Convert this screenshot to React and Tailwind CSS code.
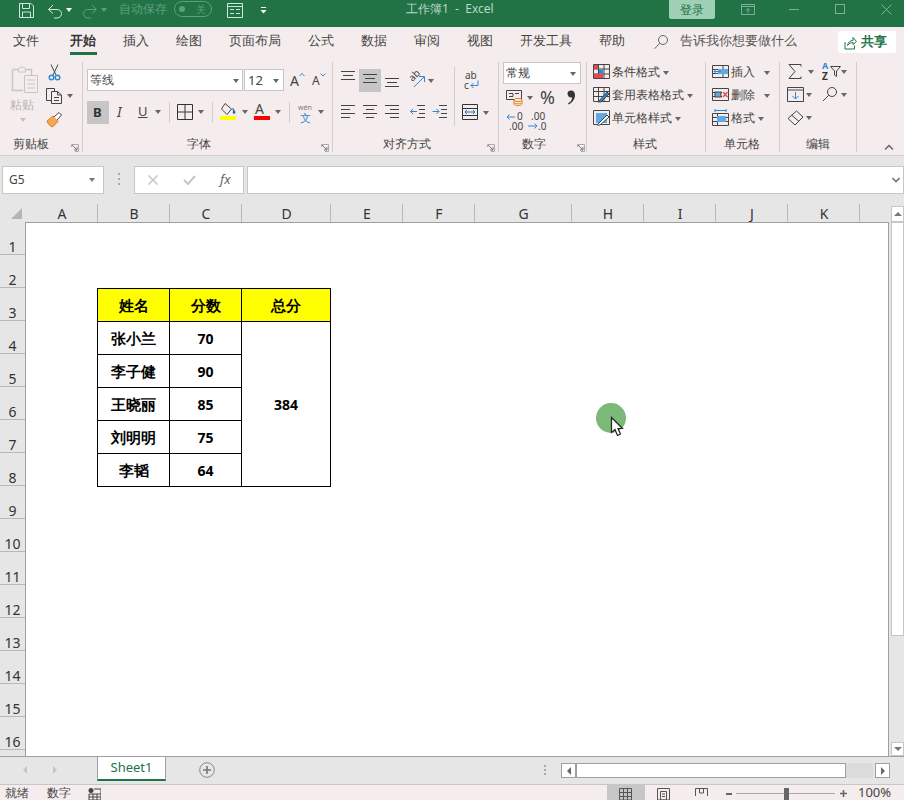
const Caret = ({ c = "", color = "border-t-[#666]" }) => (
  <span className={`absolute w-0 h-0 border-x-[3.5px] border-x-transparent border-t-[4px] ${color} ${c}`} />
);
const Sep = ({ c }) => <div className={`absolute w-px bg-[#d2cece] ${c}`} />;
const T = ({ c = "", children }) => (
  <span className={`absolute whitespace-nowrap leading-none ${c}`}>{children}</span>
);
const Launcher = ({ c }) => (
  <svg className={`absolute ${c}`} width="8" height="8" viewBox="0 0 8 8" fill="none" stroke="#777">
    <path d="M0.5 3V0.5H7.5V7.5H4" stroke="#aaa" />
    <path d="M1 1L6 6M6 3V6H3" />
  </svg>
);
const Ico = ({ c, w = 16, h = 16, children }) => (
  <svg className={`absolute ${c}`} width={w} height={h} viewBox={`0 0 ${w} ${h}`} fill="none">
    {children}
  </svg>
);
const Lines = ({ c, ys, xs }) => (
  <Ico c={c} w={15} h={15}>
    {ys.map((y, i) => (
      <path key={i} d={`M${xs[i][0]} ${y}H${xs[i][1]}`} stroke="#444" />
    ))}
  </Ico>
);

const cols = [
  ["A", "w-[72px]"], ["B", "w-[72px]"], ["C", "w-[72px]"], ["D", "w-[89px]"], ["E", "w-[72px]"], ["F", "w-[72px]"],
  ["G", "w-[97px]"], ["H", "w-[72px]"], ["I", "w-[72px]"], ["J", "w-[72px]"], ["K", "w-[72px]"],
];
const rows = Array.from({ length: 16 }, (_, i) => i + 1);
const tabs = [
  ["文件", "left-[13px]"], ["插入", "left-[123px]"], ["绘图", "left-[176px]"], ["页面布局", "left-[229px]"],
  ["公式", "left-[308px]"], ["数据", "left-[361px]"], ["审阅", "left-[414px]"], ["视图", "left-[467px]"],
  ["开发工具", "left-[520px]"], ["帮助", "left-[599px]"],
];
const people = [["张小兰", "70"], ["李子健", "90"], ["王晓丽", "85"], ["刘明明", "75"], ["李韬", "64"]];

function TitleBar() {
  const dim = "#7fb096";
  const w = "#d3e5da";
  return (
    <div className="absolute left-0 top-0 w-[904px] h-[27px] bg-[#217346]">
      <Ico c="left-[18px] top-[2px]" w={17} h={17}>
        <path d="M1.5 1.5H13L15.5 4V15.5H1.5Z M4.5 1.5V6.5H11.5V1.5 M4.5 15.5V10H12.5V15.5" stroke={w} />
      </Ico>
      <Ico c="left-[47px] top-[3px]" w={16} h={16}>
        <path d="M1.5 6.5H10C13 6.5 14.5 8.5 14.5 10.5S13 15 10 15H7M1.5 6.5L6 2M1.5 6.5L6 10.5" stroke={w} />
      </Ico>
      <Caret c="left-[66px] top-[8px]" color="border-t-white" />
      <Ico c="left-[82px] top-[3px]" w={16} h={16}>
        <path d="M14.5 6.5H6C3 6.5 1.5 8.5 1.5 10.5S3 15 6 15H9M14.5 6.5L10 2M14.5 6.5L10 10.5" stroke="#5f9d7c" />
      </Ico>
      <Caret c="left-[101px] top-[8px]" color="border-t-[#5f9d7c]" />
      <T c="left-[119px] top-[3px] text-[12px] text-[#5f9d7c]">自动保存</T>
      <div className="absolute left-[174px] top-[1px] w-[38px] h-[16px] rounded-full border border-[#5f9d7c]">
        <div className="absolute left-[4px] top-[4px] w-[6px] h-[6px] rounded-full bg-[#5f9d7c]" />
        <T c="left-[21px] top-[2px] text-[10px] text-[#5f9d7c]">关</T>
      </div>
      <Ico c="left-[227px] top-[3px]" w={16} h={15}>
        <path d="M0.5 0.5H15.5V14.5H0.5Z M0.5 3.5H15.5 M3 6.5H7M9 6.5H13M3 10.5H7M9 10.5H13" stroke={w} />
      </Ico>
      <Ico c="left-[260px] top-[7px]" w={7} h={7}>
        <path d="M1 0.5H6" stroke="white" />
        <path d="M0.5 3H6.5L3.5 6.5Z" fill="white" />
      </Ico>
      <T c="left-[406px] top-[3px] text-[12px] text-[#bcd6c8]">工作簿1&nbsp;&nbsp;-&nbsp;&nbsp;Excel</T>
      <div className="absolute left-[669px] top-0 w-[46px] h-[19px] rounded-b-[2px] bg-[#9fd0b5] flex items-center justify-center text-[12px] text-[#217346]">
        登录
      </div>
      <Ico c="left-[741px] top-[4px]" w={14} h={11}>
        <path d="M0.5 0.5H13.5V10.5H0.5Z M0.5 2.5H13.5 M7 9V4.5M5 6.5L7 4.5L9 6.5" stroke={dim} />
      </Ico>
      <div className="absolute left-[789px] top-[9px] w-[10px] h-px bg-[#7fb096]" />
      <div className="absolute left-[835px] top-[4px] w-[10px] h-[10px] border border-[#7fb096]" />
      <Ico c="left-[881px] top-[4px]" w={11} h={11}>
        <path d="M0.5 0.5L10.5 10.5M10.5 0.5L0.5 10.5" stroke={dim} />
      </Ico>
    </div>
  );
}

function TabRow() {
  return (
    <div className="absolute left-0 top-[27px] w-[904px] h-[28px] bg-[#f5eded] text-[13px] text-[#444]">
      {tabs.map(([n, c]) => (
        <T key={n} c={`${c} top-[7px]`}>{n}</T>
      ))}
      <T c="left-[70px] top-[7px] font-bold text-[#333]">开始</T>
      <div className="absolute left-[70px] top-[25px] w-[27px] h-[3px] bg-[#217346]" />
      <Ico c="left-[653px] top-[7px]" w={16} h={16}>
        <circle cx="10" cy="6" r="4.5" stroke="#666" />
        <path d="M6.8 9.2L1.5 14.8" stroke="#666" />
      </Ico>
      <T c="left-[680px] top-[7px] text-[#555]">告诉我你想要做什么</T>
      <div className="absolute left-[838px] top-[4px] w-[58px] h-[22px] bg-white rounded-[2px]" />
      <Ico c="left-[844px] top-[9px]" w={13} h={14}>
        <path d="M1 6V13H10.5V9.5M3.5 9.5C4 6 6.5 4.5 9 4.5V1.5L12.5 5.5L9 8.5V6.5C7 6.5 5 7.5 3.5 9.5Z" stroke="#217346" />
      </Ico>
      <T c="left-[861px] top-[8px] font-bold text-[#217346]">共享</T>
    </div>
  );
}

function Ribbon() {
  return (
    <div className="absolute left-0 top-[55px] w-[904px] h-[101px] bg-[#f5eded] border-b border-[#d0cfcf] text-[12px] text-[#444]">
      <div className="absolute -top-[55px] left-0 w-[904px] h-[156px] pointer-events-none">
        {/* clipboard */}
        <Ico c="left-[11px] top-[65px]" w={28} h={29}>
          <path d="M1.5 4.5H7M15 4.5H20.5V10M1.5 4.5V25.5H12" stroke="#c6c6c6" strokeWidth="1.5" />
          <path d="M7.5 4C7.5 1.5 14.5 1.5 14.5 4V7H7.5Z" stroke="#c6c6c6" />
          <path d="M13.5 10.5H26.5V27.5H13.5Z M16.5 15H24M16.5 19H24M16.5 23H24" stroke="#c6c6c6" />
        </Ico>
        <T c="left-[10px] top-[99px] text-[12px] text-[#b5b5b5]">粘贴</T>
        <Caret c="left-[20px] top-[118px]" color="border-t-[#c0c0c0]" />
        <Ico c="left-[48px] top-[64px]" w={13} h={17}>
          <path d="M3 0.5L8 11M10 0.5L5 11" stroke="#444" />
          <circle cx="3.5" cy="13.5" r="2.3" stroke="#2b88d8" strokeWidth="1.4" />
          <circle cx="9.5" cy="13.5" r="2.3" stroke="#2b88d8" strokeWidth="1.4" />
        </Ico>
        <Ico c="left-[46px] top-[88px]" w={17} h={16}>
          <path d="M0.5 0.5H8.5V3M0.5 0.5V12.5H5" stroke="#444" />
          <path d="M5.5 3.5H11.5L15.5 7V15.5H5.5Z M11.5 3.5V7H15.5 M8 9.5H13M8 12.5H13" stroke="#444" />
        </Ico>
        <Caret c="left-[67px] top-[94px]" />
        <Ico c="left-[46px] top-[111px]" w={17} h={17}>
          <path d="M1 10L7 5L12 10.5L6.5 16C4 15 2 13 1 10Z" fill="#f6a94f" stroke="#d9782a" />
          <path d="M8 6L13 1.5L15.5 4L11 9" fill="#fff" stroke="#444" />
        </Ico>
        <T c="left-[13px] top-[138px] text-[#444]">剪贴板</T>
        <Launcher c="left-[71px] top-[144px]" />
        <Sep c="left-[82px] top-[62px] h-[90px]" />

        {/* font */}
        <div className="absolute left-[87px] top-[69px] w-[156px] h-[22px] bg-white border border-[#c6c6c6]" />
        <T c="left-[90px] top-[74px]">等线</T>
        <Caret c="left-[233px] top-[79px]" />
        <div className="absolute left-[244px] top-[69px] w-[40px] h-[22px] bg-white border border-[#c6c6c6]" />
        <T c="left-[248px] top-[74px] text-[13px]">12</T>
        <Caret c="left-[273px] top-[79px]" />
        <T c="left-[290px] top-[74px] text-[14px]">A</T>
        <Ico c="left-[299px] top-[72px]" w={6} h={5}><path d="M0.5 4L3 1.5L5.5 4" stroke="#2b88d8" /></Ico>
        <T c="left-[312px] top-[75px] text-[12px]">A</T>
        <Ico c="left-[320px] top-[72px]" w={6} h={5}><path d="M0.5 1.5L3 4L5.5 1.5" stroke="#2b88d8" /></Ico>
        <div className="absolute left-[87px] top-[101px] w-[22px] h-[23px] bg-[#c6c6c6]" />
        <T c="left-[93px] top-[106px] text-[13px] font-bold text-[#333]">B</T>
        <T c="left-[117px] top-[105px] text-[14px] italic font-['Liberation_Serif',serif]">I</T>
        <T c="left-[138px] top-[105px] text-[13px] underline">U</T>
        <Caret c="left-[155px] top-[110px]" />
        <Sep c="left-[169px] top-[102px] h-[21px]" />
        <Ico c="left-[177px] top-[104px]" w={16} h={16}>
          <path d="M0.5 0.5H15.5V15.5H0.5Z M8 0.5V15.5 M0.5 8H15.5" stroke="#333" />
        </Ico>
        <Caret c="left-[198px] top-[110px]" />
        <Sep c="left-[212px] top-[102px] h-[21px]" />
        <Ico c="left-[220px] top-[103px]" w={17} h={13}>
          <path d="M5 0.5L1.5 6L7 11.5L11.5 6Z" stroke="#444" />
          <path d="M12.5 5C14 7 15 8 15 9.5C15 10.8 13 10.8 13 9.5" fill="#2b6cb0" stroke="#2b6cb0" />
        </Ico>
        <div className="absolute left-[220px] top-[116px] w-[16px] h-[4px] bg-[#ffff00]" />
        <Caret c="left-[242px] top-[110px]" />
        <T c="left-[255px] top-[102px] text-[14px]">A</T>
        <div className="absolute left-[254px] top-[116px] w-[16px] h-[4px] bg-[#ff0000]" />
        <Caret c="left-[275px] top-[110px]" />
        <Sep c="left-[289px] top-[102px] h-[21px]" />
        <T c="left-[298px] top-[104px] text-[7px] text-[#777]">wén</T>
        <T c="left-[300px] top-[112px] text-[11px] text-[#2b88d8]">文</T>
        <Caret c="left-[318px] top-[110px]" />
        <T c="left-[187px] top-[138px]">字体</T>
        <Launcher c="left-[321px] top-[144px]" />
        <Sep c="left-[332px] top-[62px] h-[90px]" />

        {/* alignment */}
        <div className="absolute left-[359px] top-[69px] w-[22px] h-[23px] bg-[#c6c6c6]" />
        <Lines c="left-[341px] top-[70px]" ys={[1.5, 5.5, 9.5]} xs={[[0, 14], [2, 12], [0, 14]]} />
        <Lines c="left-[363px] top-[73px]" ys={[1.5, 5.5, 9.5]} xs={[[0, 14], [2, 12], [0, 14]]} />
        <Lines c="left-[385px] top-[77px]" ys={[1.5, 5.5, 9.5]} xs={[[0, 14], [2, 12], [0, 14]]} />
        <T c="left-[408px] top-[70px] text-[10px] -rotate-45">ab</T>
        <Ico c="left-[413px] top-[75px]" w={13} h={13}>
          <path d="M1 12L11 2M6 1.5H11.5V7" stroke="#2b88d8" />
        </Ico>
        <Caret c="left-[428px] top-[79px]" />
        {[["left-[341px]", [[0, 14], [0, 9], [0, 14], [0, 9]]], ["left-[363px]", [[0, 14], [3, 11], [0, 14], [3, 11]]], ["left-[385px]", [[0, 14], [5, 14], [0, 14], [5, 14]]]].map(([c, xs], i) => (
          <Lines key={i} c={`${c} top-[104px]`} ys={[1.5, 5.5, 9.5, 13.5]} xs={xs} />
        ))}
        <Ico c="left-[410px] top-[104px]" w={16} h={15}>
          <path d="M7 1.5H15M9 5.5H15M9 9.5H15M7 13.5H15" stroke="#444" />
          <path d="M7 7.5H0.5M3 5L0.5 7.5L3 10" stroke="#2b88d8" />
        </Ico>
        <Ico c="left-[432px] top-[104px]" w={16} h={15}>
          <path d="M7 1.5H15M9 5.5H15M9 9.5H15M7 13.5H15" stroke="#444" />
          <path d="M0.5 7.5H7M4.5 5L7 7.5L4.5 10" stroke="#2b88d8" />
        </Ico>
        <Sep c="left-[454px] top-[67px] h-[59px]" />
        <T c="left-[465px] top-[70px] text-[10px]">ab</T>
        <T c="left-[464px] top-[80px] text-[10px]">c</T>
        <Ico c="left-[470px] top-[80px]" w={9} h={10}>
          <path d="M8 0.5V5.5H1M3.5 3L1 5.5L3.5 8" stroke="#2b88d8" />
        </Ico>
        <Ico c="left-[462px] top-[104px]" w={16} h={16}>
          <path d="M0.5 0.5H15.5V15.5H0.5Z M0.5 4.5H15.5M0.5 11.5H15.5" stroke="#333" />
          <path d="M3 8H13M5 6L3 8L5 10M11 6L13 8L11 10" stroke="#1e6fb8" />
        </Ico>
        <Caret c="left-[483px] top-[111px]" />
        <T c="left-[383px] top-[138px]">对齐方式</T>
        <Launcher c="left-[487px] top-[144px]" />
        <Sep c="left-[498px] top-[62px] h-[90px]" />

        {/* number */}
        <div className="absolute left-[503px] top-[62px] w-[78px] h-[22px] bg-white border border-[#c6c6c6]" />
        <T c="left-[506px] top-[67px]">常规</T>
        <Caret c="left-[570px] top-[72px]" />
        <Ico c="left-[506px] top-[90px]" w={17} h={16}>
          <path d="M0.5 0.5H15.5V9.5H0.5Z" stroke="#444" />
          <path d="M3 3.5H7V6.5H3M9 3.5H13" stroke="#444" />
          <ellipse cx="12" cy="10" rx="4" ry="1.6" fill="#f5eded" stroke="#e8862a" />
          <path d="M8 10V14C8 16 16 16 16 14V10M8 12.5C8 14.2 16 14.2 16 12.5" stroke="#e8862a" />
        </Ico>
        <Caret c="left-[527px] top-[96px]" />
        <T c="left-[540px] top-[88px] text-[18px] font-['Liberation_Sans',sans-serif]">%</T>
        <Ico c="left-[566px] top-[90px]" w={10} h={15}>
          <path d="M1.5 3.5C1.5 1.5 3 0.5 5 0.5C7.5 0.5 9 2.5 9 5C9 9 6.5 12.5 2.5 14.5L2 13.5C4.5 12 6 10 6.2 7.5C3.5 8 1.5 6 1.5 3.5Z" fill="#333" />
        </Ico>
        <T c="left-[517px] top-[111px] text-[10px]">0</T>
        <T c="left-[509px] top-[121px] text-[10px]">.00</T>
        <Ico c="left-[506px] top-[113px]" w={10} h={8}>
          <path d="M9 4H1M3.5 1.5L1 4L3.5 6.5" stroke="#2b88d8" />
        </Ico>
        <T c="left-[531px] top-[111px] text-[10px]">.00</T>
        <T c="left-[538px] top-[121px] text-[10px]">.0</T>
        <Ico c="left-[528px] top-[122px]" w={10} h={8}>
          <path d="M0 4H9M6.5 1.5L9 4L6.5 6.5" stroke="#2b88d8" />
        </Ico>
        <T c="left-[522px] top-[138px]">数字</T>
        <Launcher c="left-[577px] top-[144px]" />
        <Sep c="left-[586px] top-[62px] h-[90px]" />

        {/* styles */}
        <Ico c="left-[593px] top-[64px]" w={17} h={15}>
          <path d="M0.5 0.5H16.5V14.5H0.5Z M5.5 0.5V14.5M11 0.5V14.5M0.5 5H16.5M0.5 10H16.5" stroke="#444" />
          <rect x="1" y="1" width="4" height="4" fill="#e8484d" />
          <rect x="1" y="10" width="9" height="4" fill="#e8484d" />
          <rect x="6" y="5.5" width="4" height="4" fill="#2b88d8" />
        </Ico>
        <T c="left-[612px] top-[66px]">条件格式</T>
        <Caret c="left-[663px] top-[71px]" />
        <Ico c="left-[593px] top-[87px]" w={17} h={16}>
          <path d="M0.5 0.5H16.5V14.5H0.5Z M0.5 4.5H16.5M0.5 9.5H16.5M5.5 0.5V14.5M11 0.5V14.5" stroke="#444" />
          <path d="M5 15L14 5L16 7L8 15Z" fill="#2b88d8" stroke="#444" />
        </Ico>
        <T c="left-[612px] top-[89px]">套用表格格式</T>
        <Caret c="left-[687px] top-[94px]" />
        <Ico c="left-[593px] top-[110px]" w={17} h={16}>
          <path d="M0.5 0.5H16.5V14.5H0.5Z" stroke="#444" />
          <rect x="3" y="3" width="11" height="10" fill="#5ea9e6" />
          <path d="M4 15L14 5L16 7L7 15Z" fill="#fff" stroke="#444" />
        </Ico>
        <T c="left-[612px] top-[112px]">单元格样式</T>
        <Caret c="left-[675px] top-[117px]" />
        <T c="left-[633px] top-[138px]">样式</T>
        <Sep c="left-[705px] top-[62px] h-[90px]" />

        {/* cells */}
        <Ico c="left-[712px] top-[64px]" w={17} h={15}>
          <path d="M0.5 1.5H16.5V13.5H0.5Z M0.5 5.5H16.5M0.5 9.5H16.5M11 1.5V13.5" stroke="#444" />
          <rect x="6" y="5" width="10" height="5" fill="#5ea9e6" />
          <path d="M9 7.5H2M4.5 5L2 7.5L4.5 10" stroke="#2b88d8" />
        </Ico>
        <T c="left-[731px] top-[66px]">插入</T>
        <Caret c="left-[764px] top-[71px]" />
        <Ico c="left-[712px] top-[87px]" w={17} h={15}>
          <path d="M0.5 1.5H16.5V13.5H0.5Z M0.5 5.5H10M0.5 9.5H10" stroke="#444" />
          <rect x="3" y="5" width="6" height="5" fill="#5ea9e6" stroke="#444" />
          <path d="M11 5L15.5 10M15.5 5L11 10" stroke="#e8484d" strokeWidth="1.4" />
        </Ico>
        <T c="left-[731px] top-[89px]">删除</T>
        <Caret c="left-[764px] top-[94px]" />
        <Ico c="left-[712px] top-[109px]" w={17} h={17}>
          <path d="M0.5 4.5H16.5V16.5H0.5Z M5.5 4.5V16.5M0.5 8.5H16.5M0.5 12.5H16.5" stroke="#444" />
          <rect x="5" y="7" width="9" height="6" fill="#5ea9e6" />
          <path d="M3 1.5H14M3 0V3M14 0V3" stroke="#2b88d8" />
        </Ico>
        <T c="left-[731px] top-[112px]">格式</T>
        <Caret c="left-[758px] top-[117px]" />
        <T c="left-[724px] top-[138px]">单元格</T>
        <Sep c="left-[779px] top-[62px] h-[90px]" />

        {/* editing */}
        <Ico c="left-[788px] top-[64px]" w={15} h={15}>
          <path d="M13 2.5V0.5H1L7 7.5L1 14.5H13V12.5" stroke="#444" />
        </Ico>
        <Caret c="left-[808px] top-[70px]" />
        <T c="left-[822px] top-[61px] text-[9px] font-bold text-[#2b88d8]">A</T>
        <T c="left-[822px] top-[71px] text-[10px] font-bold text-[#333]">Z</T>
        <Ico c="left-[830px] top-[66px]" w={11} h={11}>
          <path d="M0.5 0.5H10.5L6.5 5V10.5L4.5 9V5Z" stroke="#444" />
        </Ico>
        <Caret c="left-[841px] top-[70px]" />
        <Ico c="left-[787px] top-[87px]" w={17} h={15}>
          <path d="M0.5 0.5H16.5V14.5H0.5Z M0.5 3H16.5" stroke="#444" />
          <path d="M8.5 5V12M5.5 9L8.5 12L11.5 9" stroke="#2b88d8" />
        </Ico>
        <Caret c="left-[806px] top-[93px]" />
        <Ico c="left-[822px] top-[86px]" w={16} h={16}>
          <circle cx="10" cy="6" r="4.5" stroke="#444" />
          <path d="M6.8 9.2L1 15" stroke="#444" />
        </Ico>
        <Caret c="left-[841px] top-[93px]" />
        <Ico c="left-[787px] top-[110px]" w={17} h={16}>
          <path d="M9.5 1L16 7L8 15L1 8.5Z M4.5 5L12 11.5" stroke="#444" />
        </Ico>
        <Caret c="left-[806px] top-[116px]" />
        <T c="left-[806px] top-[138px]">编辑</T>
        <Sep c="left-[856px] top-[62px] h-[90px]" />
        <Ico c="left-[884px] top-[144px]" w={10} h={7}>
          <path d="M1 5.5L5 1.5L9 5.5" stroke="#666" strokeWidth="1.5" />
        </Ico>
      </div>
    </div>
  );
}

function FormulaBar() {
  return (
    <div className="absolute left-0 top-[156px] w-[904px] h-[48px] bg-[#e6e6e6]">
      <div className="absolute left-[2px] top-[10px] w-[102px] h-[28px] bg-white border border-[#c6c6c6]" />
      <T c="left-[9px] top-[18px] text-[12px] text-[#444]">G5</T>
      <Caret c="left-[89px] top-[22px]" color="border-t-[#777]" />
      <div className="absolute left-[118px] top-[17px] flex flex-col gap-[3px]">
        <div className="w-[2px] h-[2px] bg-[#aaa]" />
        <div className="w-[2px] h-[2px] bg-[#aaa]" />
        <div className="w-[2px] h-[2px] bg-[#aaa]" />
      </div>
      <div className="absolute left-[134px] top-[10px] w-[110px] h-[28px] bg-white border border-[#c6c6c6]" />
      <Ico c="left-[148px] top-[19px]" w={10} h={10}>
        <path d="M0.5 0.5L9.5 9.5M9.5 0.5L0.5 9.5" stroke="#c6c6c6" strokeWidth="1.5" />
      </Ico>
      <Ico c="left-[183px] top-[19px]" w={13} h={10}>
        <path d="M1 5L5 9L12 1" stroke="#c6c6c6" strokeWidth="2" />
      </Ico>
      <T c="left-[220px] top-[17px] text-[13px] italic font-['Liberation_Serif',serif] text-[#666]">fx</T>
      <div className="absolute left-[247px] top-[10px] w-[657px] h-[28px] bg-white border border-[#c6c6c6]" />
      <Ico c="left-[892px] top-[21px]" w={8} h={6}>
        <path d="M0.5 1L4 4.5L7.5 1" stroke="#777" strokeWidth="1.6" />
      </Ico>
    </div>
  );
}

function Sheet() {
  return (
    <div className="absolute left-0 top-[204px] w-[904px] h-[552px] bg-[#e6e6e6] overflow-hidden">
      {/* corner */}
      <div className="absolute left-[11px] top-[4px] w-0 h-0 border-l-[11px] border-l-transparent border-b-[11px] border-b-[#b5b5b5]" />
      {/* column headers */}
      <div className="absolute left-[26px] top-0 h-[18px] flex">
        {cols.map(([n, w]) => (
          <div key={n} className={`${w} h-[18px] pl-px pt-[2px] border-r border-[#b8b8b8] flex items-center justify-center text-[14px] leading-none text-[#333] font-['Liberation_Sans',sans-serif]`}>
            {n}
          </div>
        ))}
      </div>
      {/* grid */}
      <div className="absolute left-[25px] top-[18px] w-[864px] h-[535px] bg-white border-l border-t border-r border-[#9f9f9f]" />
      {/* row headers */}
      <div className="absolute left-0 top-[18px] w-[25px] flex flex-col">
        {rows.map((r) => (
          <div key={r} className="h-[33px] border-b border-[#b8b8b8] flex items-end justify-center text-[14px] leading-[14px] text-[#333] font-['Liberation_Sans',sans-serif]">
            {r}
          </div>
        ))}
      </div>
      {/* vertical scrollbar */}
      <div className="absolute left-[891px] top-[2px] w-[13px] h-[16px] bg-white border border-[#c6c6c6] flex items-center justify-center">
        <span className="w-0 h-0 border-x-[4px] border-x-transparent border-b-[4px] border-b-[#777]" />
      </div>
      <div className="absolute left-[891px] top-[18px] w-[13px] h-[414px] bg-white border border-[#c6c6c6]" />
      <div className="absolute left-[891px] top-[538px] w-[13px] h-[14px] bg-white border border-[#c6c6c6] flex items-center justify-center">
        <span className="w-0 h-0 border-x-[4px] border-x-transparent border-t-[4px] border-t-[#777]" />
      </div>
      {/* data table */}
      <div className="absolute left-[97px] top-[84px] w-[234px] grid grid-cols-[73px_72px_89px] grid-rows-[33px_33px_33px_33px_33px_33px] border-t border-black text-[14.67px] font-bold text-black font-['Liberation_Sans','Noto_Sans_CJK_SC',sans-serif]">
        {["姓名", "分数", "总分"].map((h, i) => (
          <div key={h} className={`flex items-center justify-center bg-[#ffff00] border-b border-r border-black ${i === 0 ? "border-l" : ""}`}>
            {h}
          </div>
        ))}
        {people.map(([n, s], i) => (
          <div key={n} className="contents">
            <div className="flex items-center justify-center border-b border-r border-l border-black">{n}</div>
            <div className="flex items-center justify-center border-b border-r border-black text-[14px]">{s}</div>
            {i === 0 && (
              <div className="row-span-5 flex items-center justify-center border-b border-r border-black text-[14px]">384</div>
            )}
          </div>
        ))}
      </div>
      {/* cursor */}
      <div className="absolute left-[596px] top-[199px] w-[30px] h-[30px] rounded-full bg-[#7ab977]" />
      <svg className="absolute left-[610px] top-[212px]" width="15" height="21" viewBox="0 0 15 21">
        <path d="M1.5 1.5V16.5L5 13.5L7.5 19.5L10.5 18L8 12.5H12.5Z" fill="white" stroke="#222" strokeWidth="1.2" />
      </svg>
    </div>
  );
}

function TabBar() {
  return (
    <div className="absolute left-0 top-[756px] w-[904px] h-[29px] bg-[#e6e6e6] border-t border-[#9f9f9f] border-b border-b-[#c6c6c6]">
      <span className="absolute left-[23px] top-[9px] w-0 h-0 border-y-[4px] border-y-transparent border-r-[4px] border-r-[#c6c6c6]" />
      <span className="absolute left-[53px] top-[9px] w-0 h-0 border-y-[4px] border-y-transparent border-l-[4px] border-l-[#c6c6c6]" />
      <div className="absolute left-[97px] -top-px w-[69px] h-[25px] bg-white border-l border-r border-t border-[#9f9f9f] border-b-2 border-b-[#217346] flex items-center justify-center text-[13px] text-[#217346]">
        Sheet1
      </div>
      <Ico c="left-[199px] top-[5px]" w={16} h={16}>
        <circle cx="8" cy="8" r="7.3" stroke="#888" />
        <path d="M4 8H12M8 4V12" stroke="#777" strokeWidth="1.6" />
      </Ico>
      <div className="absolute left-[544px] top-[8px] flex flex-col gap-[2px]">
        <div className="w-[2px] h-[2px] bg-[#aaa]" />
        <div className="w-[2px] h-[2px] bg-[#aaa]" />
        <div className="w-[2px] h-[2px] bg-[#aaa]" />
      </div>
      <div className="absolute left-[561px] top-[6px] w-[15px] h-[15px] bg-white border border-[#9f9f9f] flex items-center justify-center">
        <span className="w-0 h-0 border-y-[4px] border-y-transparent border-r-[4px] border-r-[#666]" />
      </div>
      <div className="absolute left-[576px] top-[6px] w-[270px] h-[15px] bg-white border border-[#9f9f9f]" />
      <div className="absolute left-[846px] top-[6px] w-[27px] h-[15px] bg-[#dcdadb]" />
      <div className="absolute left-[875px] top-[6px] w-[15px] h-[15px] bg-white border border-[#9f9f9f] flex items-center justify-center">
        <span className="w-0 h-0 border-y-[4px] border-y-transparent border-l-[4px] border-l-[#666]" />
      </div>
    </div>
  );
}

function StatusBar() {
  return (
    <div className="absolute left-0 top-[785px] w-[904px] h-[15px] bg-[#f5eded] overflow-hidden text-[12px] text-[#444]">
      <T c="left-[5px] top-[2px]">就绪</T>
      <T c="left-[47px] top-[2px]">数字</T>
      <Ico c="left-[88px] top-[3px]" w={13} h={12}>
        <circle cx="3" cy="2.5" r="2.5" fill="#444" />
        <path d="M6 1H13V12H1V6H13M5 6V12M9 6V12M1 9H13" stroke="#444" />
      </Ico>
      <div className="absolute left-[607px] top-0 w-[38px] h-[15px] bg-[#c6c6c6]" />
      <Ico c="left-[619px] top-[3px]" w={13} h={12}>
        <path d="M0.5 0.5H12.5V12H0.5Z M4.5 0.5V12M8.5 0.5V12M0.5 4.5H12.5M0.5 8.5H12.5" stroke="#555" />
      </Ico>
      <Ico c="left-[657px] top-[3px]" w={13} h={12}>
        <path d="M0.5 0.5H12.5V12H0.5Z M3.5 3.5H9.5V12H3.5Z M5 6H8M5 8.5H8" stroke="#555" />
      </Ico>
      <Ico c="left-[695px] top-[3px]" w={13} h={12}>
        <path d="M0.5 0.5H12.5V8M0.5 0.5V8M4.5 0.5V5H8.5V0.5" stroke="#555" />
      </Ico>
      <div className="absolute left-[726px] top-[8px] w-[6px] h-[2px] bg-[#666]" />
      <div className="absolute left-[736px] top-[8px] w-[99px] h-px bg-[#aaa]" />
      <div className="absolute left-[784px] top-[3px] w-[5px] h-[12px] bg-[#666]" />
      <Ico c="left-[840px] top-[5px]" w={7} h={7}>
        <path d="M0 3.5H7M3.5 0V7" stroke="#666" strokeWidth="1.6" />
      </Ico>
      <T c="left-[858px] top-[1px] text-[13px]">100%</T>
    </div>
  );
}

export default function App() {
  return (
    <div className="relative w-[904px] h-[800px] overflow-hidden bg-white font-['Open_Sans','Noto_Sans_CJK_SC',sans-serif]">
      <TitleBar />
      <TabRow />
      <Ribbon />
      <FormulaBar />
      <Sheet />
      <TabBar />
      <StatusBar />
    </div>
  );
}
